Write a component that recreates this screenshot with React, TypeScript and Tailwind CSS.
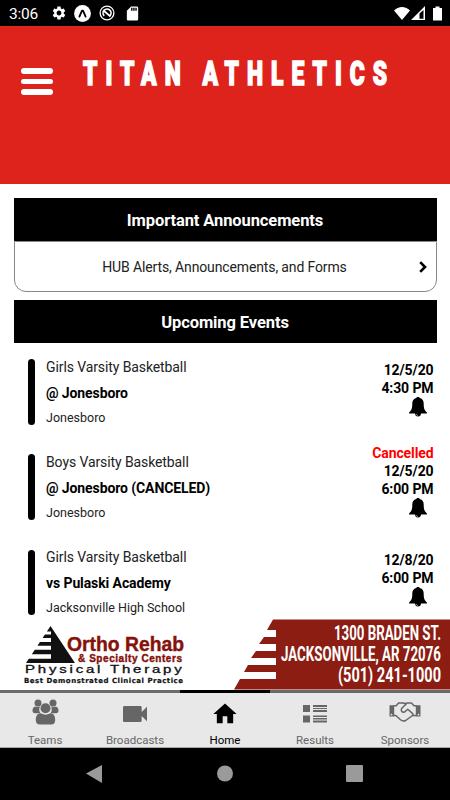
import type { ReactNode } from "react";
import { MdHome, MdSdStorage, MdSettings, MdVideocam } from "react-icons/md";

interface SportEvent {
  sport: string;
  opponent: string;
  location: string;
  date: string;
  time: string;
  cancelled?: boolean;
}

const events: SportEvent[] = [
  { sport: "Girls Varsity Basketball", opponent: "@ Jonesboro", location: "Jonesboro", date: "12/5/20", time: "4:30 PM" },
  { sport: "Boys Varsity Basketball", opponent: "@ Jonesboro (CANCELED)", location: "Jonesboro", date: "12/5/20", time: "6:00 PM", cancelled: true },
  { sport: "Girls Varsity Basketball", opponent: "vs Pulaski Academy", location: "Jacksonville High School", date: "12/8/20", time: "6:00 PM" },
];

function ExpoIcon() {
  return (
    <svg width="17" height="17" viewBox="0 0 17 17">
      <circle cx="8.5" cy="8.5" r="8.4" fill="#fff" />
      <path d="M5.4 11.6 8 5.6h1l2.6 6" fill="none" stroke="#000" strokeWidth="1.8" strokeLinecap="round" strokeLinejoin="round" />
    </svg>
  );
}

function NoSyncIcon() {
  return (
    <svg width="16" height="16" viewBox="0 0 16 16" fill="none" stroke="#fff">
      <circle cx="8" cy="8" r="6.9" strokeWidth="1.3" />
      <path d="M5.2 10.8A4 4 0 1 1 11 10.7M5 6l6.5 5.5" strokeWidth="1.7" />
    </svg>
  );
}

function ChevronIcon() {
  return (
    <svg width="8" height="12" viewBox="0 0 8 12" fill="none" stroke="#000" strokeWidth="2.6">
      <path d="M1.200 1.200 6 6 1.200 10.800" />
    </svg>
  );
}

function BellIcon() {
  return (
    <svg width="18" height="20" viewBox="0 0 18 20" fill="#000">
      <path d="M9 0c1 0 1.6.4 1.8 1.1C13.5 1.9 14.7 4 14.7 6.5c0 4.500.6 6.500 3 8.800.5.500.300 1.300-.5 1.300H.8c-.8 0-1-.8-.5-1.300 2.400-2.300 3-4.300 3-8.800 0-2.500 1.200-4.600 3.900-5.400C7.400.4 8 0 9 0Z" />
      <path d="M6 16h6a3 3.500 0 0 1-6 0Z" />
      <path d="M7.300 17c0 1 .6 1.400 1.600 1.400" fill="none" stroke="#fff" strokeWidth=".6" />
    </svg>
  );
}

function TeamsIcon() {
  return (
    <svg width="27" height="26" viewBox="0 0 27 26" fill="#666" className="mb-[3px]">
      <circle cx="6" cy="4" r="3.5" />
      <circle cx="21" cy="4" r="3.5" />
      <path d="M.5 11.5c0-2.500 1.500-4 3.500-4 1.300.7 2.700.7 4 .1-1.200 2.300-1 4.700.4 6.600H3c-1.700 0-2.500-.9-2.500-2.700ZM26.500 11.500c0-2.500-1.500-4-3.500-4-1.300.7-2.700.7-4 .1 1.200 2.300 1 4.700-.4 6.600H24c1.700 0 2.500-.9 2.500-2.700Z" />
      <circle cx="13.5" cy="9.3" r="5" />
      <path d="M3.800 21c0-4 1.500-6.800 5-6.800 2.900 1.900 6.500 1.900 9.400 0 3.500 0 5 2.800 5 6.800 0 3-1.600 4.600-4 4.600H7.800c-2.400 0-4-1.600-4-4.600Z" />
    </svg>
  );
}

function ResultsIcon() {
  return (
    <svg width="24" height="18" viewBox="0 0 24 18" fill="#666">
      <path d="M0 0h7v7H0zM0 10.500h7v7H0zM10 0h14v2H10zM10 3h14v1H10zM10 5h14v2H10zM10 10.500h14v1.500H10zM10 13h14v1.500H10zM10 15.500h14v2H10z" />
    </svg>
  );
}

function HandshakeIcon() {
  return (
    <svg width="32" height="20" viewBox="0 0 32 20" fill="none" stroke="#666" strokeWidth="1.5" strokeLinejoin="round" strokeLinecap="round" className="mb-[3px]">
      <path d="M.5 3.200h4.700v11.300H.5zM26.800 3.200h4.700v11.300h-4.700z" fill="#666" stroke="none" />
      <circle cx="2.500" cy="12.600" r=".9" fill="#e8e8e8" stroke="none" />
      <circle cx="29.500" cy="12.600" r=".9" fill="#e8e8e8" stroke="none" />
      <path d="M5.200 3.700h2L9.500 1h5l1.700.8L18 1h4.500L25 3.700h1.800" />
      <path d="M5.200 13.500h1.600l4.700 4.300c1.500 1.300 3.500 1.600 5.200.7l6.800-5h3.300" />
      <path d="M17 2.300 13 6c-1.200 1.300-.8 3.300.5 4 1 .5 2.200.1 3-.7l2.300-2.100 4.600 4.200c.7.700.7 1.500.1 2.100" />
    </svg>
  );
}

function StatusBar() {
  return (
    <div className="flex h-[26px] items-center bg-black pl-[9px] pr-2 text-white">
      <span className="w-[42px] pt-[3px] text-[15.5px] tracking-[-0.2px]">3:06</span>
      <MdSettings size={16} />
      <div className="ml-[7px]"><ExpoIcon /></div>
      <div className="ml-2"><NoSyncIcon /></div>
      <MdSdStorage size={17} className="ml-[9px]" />
      <svg width="49" height="15" viewBox="0 0 49 15" className="ml-auto" fill="#fff">
        <path d="M1 4.500C5.500-.3 12.500-.3 17 4.500L9 14Z" />
        <path fillRule="evenodd" d="M18 14 32 0v14H18ZM26.500 7.500V12.700h4V4Z" />
        <path d="M40 2h2.500V.5h4V2H49v12.500h-9Z" />
      </svg>
    </div>
  );
}

function SectionTitle({ children }: { children: ReactNode }) {
  return (
    <h2 className="flex h-[43px] items-center justify-center bg-black pt-[3px] text-[16.5px] font-bold tracking-[-0.1px] text-white">
      {children}
    </h2>
  );
}

function EventRow({ event }: { event: SportEvent }) {
  return (
    <div className="flex h-[95.4px] items-start">
      <div className="mt-4 h-[65.5px] w-[7px] rounded-full bg-black" />
      <div className="ml-[11px] pt-[14.600px]">
        <p className="text-[14px] leading-[19px] tracking-[-0.1px] text-[#222]">{event.sport}</p>
        <p className="mt-[7px] text-[14px] font-bold leading-[19px] tracking-[-0.1px] text-black">{event.opponent}</p>
        <p className="mt-[6px] text-[12.5px] leading-[17px] text-[#222]">{event.location}</p>
      </div>
      <div className={`ml-auto flex flex-col items-end text-[14px] font-bold leading-[18px] tracking-[-0.1px] ${event.cancelled ? "pt-[6px]" : "pt-[17.500px]"}`}>
        {event.cancelled && <span className="text-[#f00]">Cancelled</span>}
        <span>{event.date}</span>
        <span>{event.time}</span>
        <div className="pr-[7px]"><BellIcon /></div>
      </div>
    </div>
  );
}

function SponsorBanner() {
  return (
    <div className="flex h-[71px] bg-white">
      <svg width="225" height="71" viewBox="0 0 225 71" fontFamily="'Liberation Sans', sans-serif" fontWeight="bold">
        <path
          fill="#111"
          d="M50.500 7 75 44H26l2.800-4.300H51V35.300H31.800l3-4.600H51V26.700H37.500l2.400-3.700H51V19H42.600l2.300-3.500H51V12.500H46.900Z"
        />
        <g fill="#84120b" stroke="#84120b" strokeWidth=".4">
          <text x="67" y="31.500" fontSize="19.500" textLength="117" lengthAdjust="spacingAndGlyphs">Ortho Rehab</text>
          <text x="78" y="43" fontSize="10" textLength="104">&amp; Specialty Centers</text>
        </g>
        <g transform="translate(25 54) scale(1.5 1)">
          <text fontSize="10" fontWeight="normal" fill="#111" stroke="#111" strokeWidth=".3" textLength="104.500">Physical Therapy</text>
        </g>
        <text x="24" y="64" fontSize="7" fontFamily="'DejaVu Sans', sans-serif" fill="#111" stroke="#111" strokeWidth=".2" textLength="159">Best Demonstrated Clinical Practice</text>
      </svg>
      <svg width="225" height="71" viewBox="0 0 225 71" fontFamily="Roboto, sans-serif" fontWeight="bold">
        <path fill="#8b1d12" d="M48 .5H225V70.500H9L15 60H51V53H19L23 46H51V39H26L31 32H51V25H34L39 18H51V11H42Z" />
        <g fill="#fff" fontSize="20">
          <text x="109" y="21" textLength="107" lengthAdjust="spacingAndGlyphs">1300 BRADEN ST.</text>
          <text x="56" y="42.300" textLength="160" lengthAdjust="spacingAndGlyphs">JACKSONVILLE, AR 72076</text>
          <text x="113" y="63.200" textLength="103" lengthAdjust="spacingAndGlyphs">(501) 241-1000</text>
        </g>
      </svg>
    </div>
  );
}

const tabs = [
  { label: "Teams", icon: <TeamsIcon /> },
  { label: "Broadcasts", icon: <MdVideocam size={32} /> },
  { label: "Home", icon: <MdHome size={28} />, active: true },
  { label: "Results", icon: <ResultsIcon /> },
  { label: "Sponsors", icon: <HandshakeIcon /> },
];

function TabBar() {
  return (
    <nav className="grid h-[58px] grid-cols-5 border-b border-[#aaa] bg-[#e8e8e8]">
      {tabs.map((tab) => (
        <div
          key={tab.label}
          className={`flex flex-col items-center border-t-[3px] ${tab.active ? "border-black text-black" : "border-[#6b6b6b] text-[#666]"}`}
        >
          <div className="mt-0.5 flex h-[37px] items-center justify-center">{tab.icon}</div>
          <span className="text-[11.5px] leading-[17px]">{tab.label}</span>
        </div>
      ))}
    </nav>
  );
}

export default function App() {
  return (
    <div className="flex h-[800px] w-[450px] flex-col overflow-hidden bg-white font-['Roboto',sans-serif]">
      <StatusBar />

      <header className="flex h-[158px] items-start bg-[#de231d]">
        <div className="ml-[21px] mt-[42px] flex w-8 shrink-0 flex-col gap-[5px]">
          <div className="h-[6px] rounded-sm bg-white" />
          <div className="h-[5px] rounded-sm bg-white" />
          <div className="h-[6px] rounded-sm bg-white" />
        </div>
        <h1 className="ml-[30px] mt-[27px] w-[460px] shrink-0 origin-left scale-x-[0.67] whitespace-nowrap text-[34px] font-black leading-10 tracking-[12px] text-white [-webkit-text-stroke:1.6px_white]">
          TITAN ATHLETICS
        </h1>
      </header>

      <main className="h-[435px] overflow-hidden px-[13.5px] pt-3.5">
        <section className="mb-2">
          <SectionTitle>Important Announcements</SectionTitle>
          <div className="flex h-[51px] items-center rounded-b-xl border border-[#888] pr-[9px]">
            <span className="flex-1 pl-4 pt-0.5 text-center text-[14px] tracking-[-0.13px] text-[#222]">HUB Alerts, Announcements, and Forms</span>
            <ChevronIcon />
          </div>
        </section>

        <section>
          <SectionTitle>Upcoming Events</SectionTitle>
          <div className="pl-[14.5px] pr-[3px]">
            {events.map((event, i) => (
              <EventRow key={i} event={event} />
            ))}
          </div>
        </section>
      </main>

      <SponsorBanner />
      <TabBar />

      {/* Android navigation buttons */}
      <div className="h-[52px] bg-black">
        <svg width="450" height="52" fill="#9a9a9a">
          <path d="M86 25.500 102 17v18Z" />
          <circle cx="225" cy="25.500" r="8" />
          <rect x="346" y="17" width="17" height="17" rx="1" />
        </svg>
      </div>
    </div>
  );
}
